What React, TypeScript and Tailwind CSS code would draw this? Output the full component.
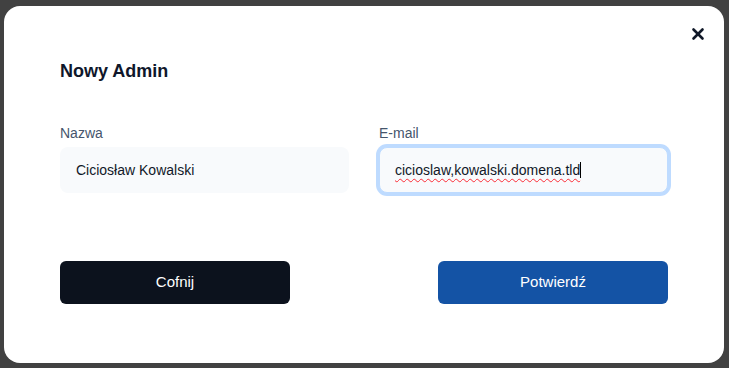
import React from "react";
import { X } from "lucide-react";

const Field = ({
   label,
   value,
   focused,
}: {
   label: string;
   value: string;
   focused?: boolean;
}) => (
   <div className="flex flex-col">
      <span className="text-sm leading-5 text-slate-600 mb-[4px]">{label}</span>
      {focused ? (
         <div className="h-[46px] rounded-lg bg-slate-50 border border-blue-200 ring-[3px] ring-blue-200 flex items-center px-[15px] text-sm text-gray-900">
            <span className="underline decoration-wavy decoration-red-500 decoration-1 underline-offset-[3px]">
               {value}
            </span>
            <span className="w-px h-[16px] bg-black" />
         </div>
      ) : (
         <div className="h-[46px] rounded-lg bg-slate-50 flex items-center px-4 text-sm text-gray-900">
            {value}
         </div>
      )}
   </div>
);

export default function App() {
   return (
      <div
         className="h-[368px] bg-[#414141] pt-[6px] pl-[4px]"
         style={{ fontFamily: '"Liberation Sans", Arial, sans-serif' }}
      >
         <div className="relative w-[720px] h-[357px] bg-white rounded-2xl px-[56px] pt-[51px]">
            <button className="absolute right-[17px] top-[19px] text-gray-900">
               <X size={18} strokeWidth={3.5} />
            </button>
            <h2 className="text-lg leading-7 font-bold text-slate-900">Nowy Admin</h2>
            <div className="grid grid-cols-2 gap-[30px] mt-[38px]">
               <Field label="Nazwa" value="Ciciosław Kowalski" />
               <Field label="E-mail" value="cicioslaw,kowalski.domena.tld" focused />
            </div>
            <div className="flex justify-between mt-[68px]">
               <button className="w-[230px] h-[43px] rounded-md bg-[#0c121d] text-white text-[15px]">
                  Cofnij
               </button>
               <button className="w-[230px] h-[43px] rounded-md bg-[#1453a5] text-white text-[15px]">
                  Potwierdź
               </button>
            </div>
         </div>
      </div>
   );
}
